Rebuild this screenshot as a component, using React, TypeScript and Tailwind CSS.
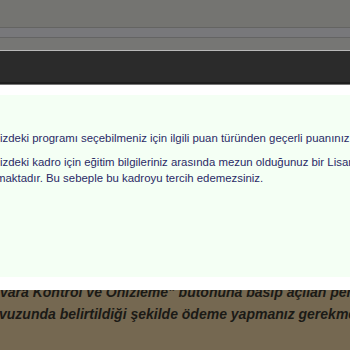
export default function App() {
  const sans = { fontFamily: '"Liberation Sans", Arial, sans-serif' };
  return (
    <div className="relative w-[350px] h-[350px] overflow-hidden bg-[#756851]" style={sans}>
      {/* header bands */}
      <div className="h-[27px] bg-[#747471]" />
      <div className="h-px bg-[#646462]" />
      <div className="h-[9px] bg-[#78787b]" />
      <div className="h-px bg-[#646464]" />
      <div className="h-[12px] bg-[#767674]" />
      <div className="h-px bg-[#b8b8b8]" />
      <div className="h-[31px] bg-[#2b2b2b]" />
      <div className="h-[2px] bg-[#1f1f1f]" />
      <div className="h-px bg-[#777777]" />
      {/* background page content */}
      <div className="pt-[196px] whitespace-nowrap font-bold italic text-[14px] leading-[22px] text-[#1b1a16]">
        <div>vara Kontrol ve Önizleme" butonuna basıp açılan pencer</div>
        <div className="-ml-[1px]">vuzunda belirtildiği şekilde ödeme yapmanız gerekmek</div>
      </div>
      {/* modal */}
      <div className="absolute left-0 right-0 top-[85px] h-[205px] bg-white pt-[10px]">
        <div className="h-[182px] bg-[#f4fff4] pt-[35px] whitespace-nowrap text-[11.4px] leading-[16px] text-[#2a2a66]">
          <p>izdeki programı seçebilmeniz için ilgili puan türünden geçerli puanınız bulunmamaktadır.</p>
          <p className="mt-[8px]">izdeki kadro için eğitim bilgileriniz arasında mezun olduğunuz bir Lisans programı</p>
          <p className="-ml-[4px]">maktadır. Bu sebeple bu kadroyu tercih edemezsiniz.</p>
        </div>
      </div>
    </div>
  );
}
